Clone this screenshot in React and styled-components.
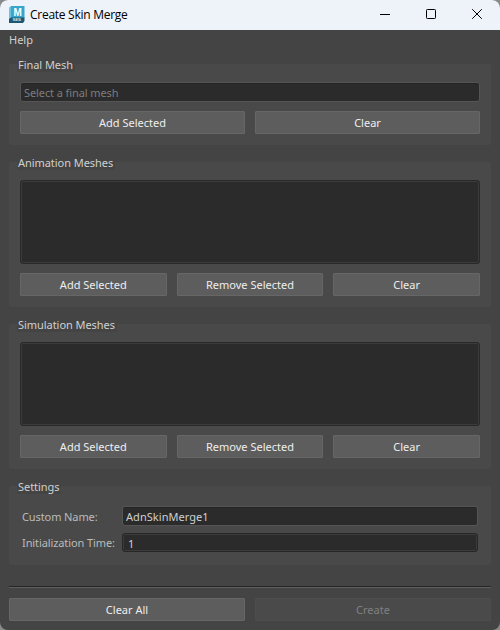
import styled, { createGlobalStyle } from 'styled-components'

const GlobalStyle = createGlobalStyle`
  * {
    box-sizing: border-box;
  }

  body {
    margin: 0;
    background: #8a8a8a;
  }
`

const App = () => {
  return (
    <>
      <GlobalStyle />
      <Window>
        <TitleBar>
          <MayaIcon />
          <Title>Create Skin Merge</Title>
          <WindowControls />
        </TitleBar>
        <MenuBar>
          <MenuItem>Help</MenuItem>
        </MenuBar>
        <Content>
          <Group $height={81}>
            <Legend>Final Mesh</Legend>
            <Field placeholder="Select a final mesh" />
            <ButtonRow>
              <Button>Add Selected</Button>
              <Button>Clear</Button>
            </ButtonRow>
          </Group>
          <MeshGroup title="Animation Meshes" />
          <MeshGroup title="Simulation Meshes" />
          <Group $height={79}>
            <Legend>Settings</Legend>
            <Form>
              <Label htmlFor="name">Custom Name:</Label>
              <Field id="name" defaultValue="AdnSkinMerge1" />
              <Label htmlFor="time">Initialization Time:</Label>
              <SpinField id="time" defaultValue="1" />
            </Form>
          </Group>
        </Content>
        <Separator />
        <Footer>
          <Button>Clear All</Button>
          <Button disabled>Create</Button>
        </Footer>
      </Window>
    </>
  )
}

const MeshGroup = ({ title }) => (
  <Group $height={145}>
    <Legend>{title}</Legend>
    <MeshList />
    <ButtonRow>
      <Button>Add Selected</Button>
      <Button>Remove Selected</Button>
      <Button>Clear</Button>
    </ButtonRow>
  </Group>
)

const MayaIcon = () => (
  <Logo viewBox="0 0 16 17">
    <path d="M0 1.5 2 0v15.5L0 17z" fill="#6cc3dc" />
    <path d="M2 0h13.5v12H2z" fill="#37a5cc" />
    <path d="M0 13 2 11.5h13.5V15L14 17H0z" fill="#1c5873" />
    <text x="8.6" y="9.5" textAnchor="middle" fontSize="10" fontWeight="700" fill="#fff">M</text>
    <text x="7.8" y="15.4" textAnchor="middle" fontSize="3" fontWeight="700" fill="#d5e6ee">MAYA</text>
  </Logo>
)

const WindowControls = () => (
  <Controls>
    <svg width="10" height="10" viewBox="0 0 10 10">
      <path d="M0 5.5h10" stroke="#000" />
    </svg>
    <svg width="10" height="10" viewBox="0 0 10 10">
      <rect x="0.5" y="0.5" width="9" height="9" rx="0.8" fill="none" stroke="#000" />
    </svg>
    <svg width="10" height="10" viewBox="0 0 10 10">
      <path d="M0.2 0.2 9.8 9.8M9.8 0.2 0.2 9.8" stroke="#000" />
    </svg>
  </Controls>
)

const Window = styled.div`
  display: flex;
  flex-direction: column;
  width: 500px;
  height: 630px;
  overflow: hidden;
  border-radius: 8px;
  background: #444;
  color: #d0d0d0;
  font-family: 'Noto Sans', 'Open Sans', sans-serif;
  font-size: 11px;
  letter-spacing: 0;
`

const TitleBar = styled.header`
  display: flex;
  align-items: center;
  flex: none;
  height: 30px;
  padding: 0 18px 0 9px;
  background: #eef3f9;
`

const Logo = styled.svg`
  width: 16px;
  height: 17px;
  margin-right: 5px;
  margin-top: -2px;
  font-family: 'Liberation Sans', sans-serif;
`

const Title = styled.h1`
  flex: 1;
  margin: -1px 0 0;
  color: #000;
  font-family: 'Open Sans', sans-serif;
  font-size: 12px;
  font-weight: 400;
  letter-spacing: -0.27px;
`

const Controls = styled.div`
  display: flex;
  gap: 36px;
  margin-top: -2px;
`

const MenuBar = styled.nav`
  height: 20px;
  padding: 0 9px;
`

const MenuItem = styled.span`
  display: block;
  line-height: 20px;
`

const Content = styled.main`
  display: flex;
  flex-direction: column;
  gap: 17px;
  padding: 14px 9px 0;
`

const Group = styled.section`
  display: flex;
  flex-direction: column;
  height: ${(props) => props.$height}px;
  padding: 0 11px;
  border-radius: 2px;
  background: #494949;
`

const Legend = styled.h2`
  align-self: flex-start;
  height: 16px;
  margin: -8px 0 10px -3px;
  padding: 0 2px 0 1px;
  background: linear-gradient(#444, #444) bottom / 100% 15px no-repeat;
  font-size: 11px;
  font-weight: 400;
  letter-spacing: -0.05px;
  line-height: 17px;
`

const Field = styled.input`
  width: 100%;
  height: 20px;
  padding: 1px 3px 0;
  border: 1px solid #555;
  border-radius: 3px;
  background: #2b2b2b;
  box-shadow: inset 0 1px 0 #242424;
  color: #d0d0d0;
  font: inherit;
  letter-spacing: 0.05px;
  outline: none;

  &::placeholder {
    color: #7c7c7c;
    letter-spacing: -0.1px;
    opacity: 1;
  }
`

const SpinField = styled(Field)`
  height: 19px;
  padding: 2px 4px 0 5px;
  border-color: #272727;
  box-shadow: inset 0 0 0 1px #3b3b3b;
`

const MeshList = styled.div`
  flex: none;
  height: 84px;
  border: 1px solid #292929;
  border-radius: 3px;
  background: #2b2b2b;
  box-shadow: inset 0 0 0 1px #3b3b3b;
`

const ButtonRow = styled.div`
  display: grid;
  grid-auto-columns: 1fr;
  grid-auto-flow: column;
  gap: 10px;
  margin-top: 9px;
`

const Button = styled.button`
  height: 23px;
  padding: 0 0 1px;
  border: 1px solid #666;
  border-radius: 1px;
  background: #5d5d5d;
  color: #eee;
  font: inherit;
  letter-spacing: 0;

  &:disabled {
    border-color: #4d4d4d;
    background: #4a4a4a;
    color: #808080;
  }
`

const Form = styled.div`
  display: grid;
  grid-template-columns: 94px 356px;
  column-gap: 6px;
  row-gap: 7px;
  align-items: center;
  margin: 2px 2px 0;
`

const Label = styled.label`
  color: #bbb;
  letter-spacing: -0.1px;
  white-space: nowrap;
`

const Separator = styled.hr`
  width: 482px;
  height: 2px;
  margin: 21px 9px 10px;
  border: 0;
  border-top: 1px solid #252525;
  border-bottom: 1px solid #606060;
`

const Footer = styled(ButtonRow)`
  margin: 0;
  padding: 0 9px;
`

export default App
